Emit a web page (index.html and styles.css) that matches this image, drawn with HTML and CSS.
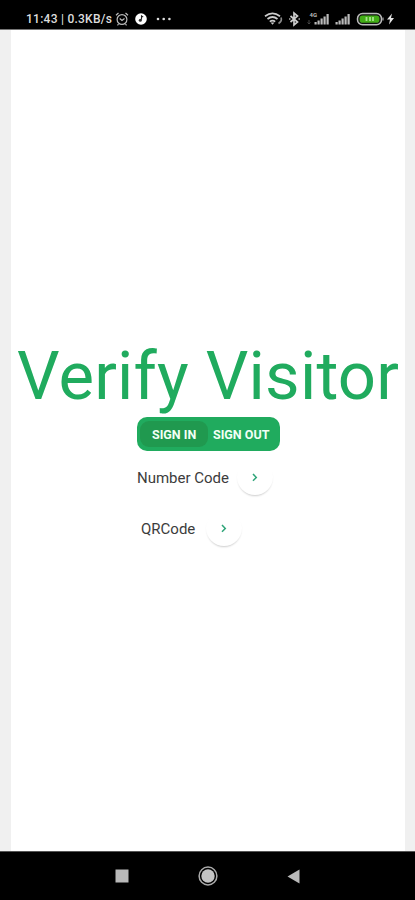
FILE: index.html
```html
<!DOCTYPE html>
<html lang="en">
<head>
<meta charset="utf-8">
<title>Verify Visitor</title>
<link rel="stylesheet" href="styles.css">
</head>
<body>
<header class="status">
  <span class="clock">11:43 | 0.3KB/s</span>
  <svg class="alarm" width="14" height="14" viewBox="0 0 14 14" fill="none" stroke="#bbb" stroke-width="1.2"><circle cx="7" cy="7.5" r="4.9"/><path d="M1 3.2 3.5 1M13 3.2 10.500 1M4.700 6.500 7 8.500l2.500-2M3.500 12l-1 1.300M10.500 12l1 1.300"/></svg>
  <svg class="note" width="12" height="12" viewBox="0 0 12 12"><circle cx="6" cy="6" r="5.800" fill="#fff"/><path d="M6.500 6.800V2.800l1.700 1.300" fill="none" stroke="#222" stroke-width="1.100"/><circle cx="5.300" cy="7.300" r="1.500" fill="#333"/></svg>
  <svg class="dots" width="16" height="4" viewBox="0 0 16 4" fill="#ddd"><circle cx="2" cy="2" r="1.300"/><circle cx="7.700" cy="2" r="1.300"/><circle cx="13.400" cy="2" r="1.300"/></svg>
  <svg class="system" width="136" height="16" viewBox="0 0 136 16">
    <g fill="none" stroke="#ccc" stroke-width="1.700"><path d="M1 5.200Q8.500-.5 16 5.200M3.500 8Q8.500 4 13.500 8M5.800 10.600Q8.500 8.500 11.200 10.600"/><path d="M14.500 12.500q4-2.500 2.500-6" stroke="#888"/></g>
    <path d="M6.600 11.500h3.800l-1.900 2.300z" fill="#ccc"/>
    <path d="m26.500 5 7 6-3.500 3V2l3.500 3-7 6" fill="none" stroke="#ccc" stroke-width="1.700"/>
    <path d="M25 8h1.500M34.500 8H36" stroke="#aaa" stroke-width="1.500"/>
    <text class="network" x="45.500" y="6">4G</text>
    <path d="M45 9v4M43.500 11.500 45 13l1.500-1.500" fill="none" stroke="#444"/>
    <g fill="#bbb"><path d="M50.500 11h2.200v2.500h-2.200zM53.500 9.500h2.200v4h-2.200zM56.500 7.500h2.200v6h-2.200zM59.500 5.500h2.200v8h-2.200zM62.500 3h2.200v10.500h-2.200z"/><path d="M71.500 11h2.200v2.500h-2.200zM74.500 9.500h2.200v4h-2.200zM77.500 7.500h2.200v6h-2.200zM80.500 5.500h2.200v8h-2.200zM83.500 3h2.200v10.500h-2.200z"/></g>
    <rect x="93.500" y="2.500" width="24" height="11.200" rx="5" fill="#111" stroke="#bbb" stroke-width="1.500"/>
    <rect x="95.600" y="4.500" width="19.800" height="7.200" rx="2.800" fill="#42ad16"/>
    <path d="M102.500 6v4M106 6v4M109 6v4" stroke="#a5e38b" stroke-width="1.800"/>
    <path d="M119 6.500v3" stroke="#aaa" stroke-width="1.200"/>
    <path d="m128 2.500-5 6h3l-1 5 5-6.500h-3z" fill="#e5e5e5"/>
  </svg>
</header>
<main class="screen">
  <h1 class="title">Verify Visitor</h1>
  <div class="tabs"><span class="tab active">SIGN IN</span><span class="tab">SIGN OUT</span></div>
  <div class="option number"><span class="label">Number Code</span><button class="go" aria-label="Number Code"><svg width="6" height="9" viewBox="0 0 6 9"><path d="m1 1 3.300 3.400L1 7.800"/></svg></button></div>
  <div class="option qr"><span class="label">QRCode</span><button class="go" aria-label="QRCode"><svg width="6" height="9" viewBox="0 0 6 9"><path d="m1 1 3.300 3.400L1 7.800"/></svg></button></div>
</main>
<nav class="navbar">
  <svg width="14" height="14" viewBox="0 0 14 14"><rect x=".5" y=".5" width="13" height="13" fill="#b9b9b9"/></svg>
  <svg width="20" height="20" viewBox="0 0 20 20"><circle cx="10" cy="10" r="8.900" fill="none" stroke="#aaa" stroke-width="1.500"/><circle cx="10" cy="10" r="6.700" fill="#c4c4c4"/></svg>
  <svg width="13" height="15" viewBox="0 0 13 15"><path d="M12.500.5v14L.5 7.500z" fill="#b9b9b9"/></svg>
</nav>
</body>
</html>
```
FILE: styles.css
```css
* { box-sizing: border-box; }
body {
  margin: 0;
  height: 900px;
  display: flex;
  flex-direction: column;
  overflow: hidden;
  background: #000;
  font-family: Roboto, "Liberation Sans", sans-serif;
}
svg { display: block; flex: none; }
.status {
  height: 30px;
  flex: none;
  display: flex;
  align-items: center;
  padding: 8px 0 0 26px;
  border-bottom: 1px solid #777;
  color: #ddd;
}
.clock {
  width: 89px;
  font-size: 12px;
  font-weight: 500;
  letter-spacing: .25px;
  line-height: 16px;
  padding-top: 1px;
  white-space: nowrap;
}
.note { margin-left: 6px; }
.dots { margin-left: 9px; }
.system { margin-left: 92px; }
.network { font-size: 6px; font-weight: 700; fill: #bbb; }
.screen {
  height: 821px;
  flex: none;
  border: solid #f0f0f0;
  border-width: 0 10px 0 11px;
  background: #fff;
  padding-top: 306px;
}
.title {
  margin: 0 0 0 6px;
  height: 81px;
  font-size: 67px;
  letter-spacing: .2px;
  line-height: 80px;
  font-weight: 400;
  color: #20ab5e;
  white-space: nowrap;
}
.tabs {
  width: 143px;
  height: 34px;
  margin-left: 126px;
  padding: 4px 3px;
  display: flex;
  border-radius: 10px;
  background: #20ab5e;
}
.tab {
  height: 26px;
  line-height: 28px;
  padding-left: 5px;
  color: #f1fff5;
  font-size: 12.500px;
  font-weight: 700;
  white-space: nowrap;
}
.tab.active {
  width: 68px;
  padding-left: 12px;
  border-radius: 9px;
  background: #20994f;
}
.option { display: flex; align-items: center; height: 36px; }
.number { margin: 8px 0 0 126px; }
.qr { margin: 15px 0 0 130px; }
.label { font-size: 15px; color: #3c3c3c; white-space: nowrap; width: 100px; line-height: 20px; padding-top: 1px; }
.qr .label { width: 65px; }
.go {
  width: 36px;
  height: 36px;
  padding: 0;
  border: 0;
  border-radius: 50%;
  background: #fff;
  display: grid;
  place-items: center;
  box-shadow: 0 2px 2px -1px rgba(0, 0, 0, .2);
}
.go path { fill: none; stroke: #2fa579; stroke-width: 1.5; }
.navbar {
  flex: 1;
  display: flex;
  align-items: center;
  padding-left: 115px;
  gap: 69px;
  border-top: 1px solid #555;
}
```
